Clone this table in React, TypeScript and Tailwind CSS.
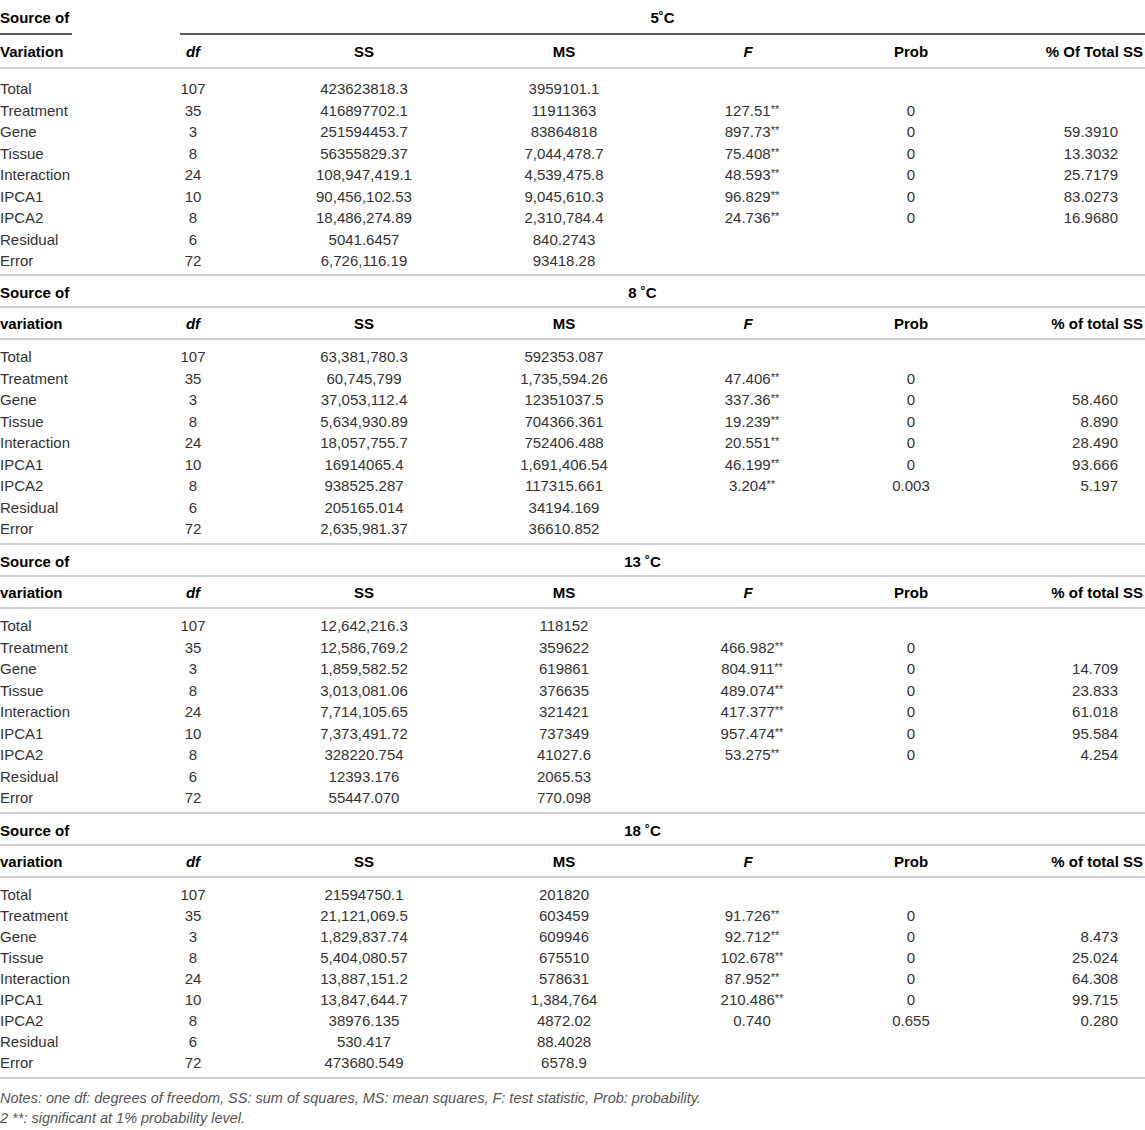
type Row = [string, string, string, string, string, string, string];

interface Section {
  title: string;
  first: boolean;
  srcLabel: string;
  pctLabel: string;
  rowH: string;
  rows: Row[];
}

const sections: Section[] = [
  {
    title: "5˚C",
    first: true,
    srcLabel: "Variation",
    pctLabel: "% Of Total SS",
    rowH: "h-[21.5px]",
    rows: [
      ["Total", "107", "423623818.3", "3959101.1", "", "", ""],
      ["Treatment", "35", "416897702.1", "11911363", "127.51**", "0", ""],
      ["Gene", "3", "251594453.7", "83864818", "897.73**", "0", "59.3910"],
      ["Tissue", "8", "56355829.37", "7,044,478.7", "75.408**", "0", "13.3032"],
      ["Interaction", "24", "108,947,419.1", "4,539,475.8", "48.593**", "0", "25.7179"],
      ["IPCA1", "10", "90,456,102.53", "9,045,610.3", "96.829**", "0", "83.0273"],
      ["IPCA2", "8", "18,486,274.89", "2,310,784.4", "24.736**", "0", "16.9680"],
      ["Residual", "6", "5041.6457", "840.2743", "", "", ""],
      ["Error", "72", "6,726,116.19", "93418.28", "", "", ""],
    ],
  },
  {
    title: "8 ˚C",
    first: false,
    srcLabel: "variation",
    pctLabel: "% of total SS",
    rowH: "h-[21.5px]",
    rows: [
      ["Total", "107", "63,381,780.3", "592353.087", "", "", ""],
      ["Treatment", "35", "60,745,799", "1,735,594.26", "47.406**", "0", ""],
      ["Gene", "3", "37,053,112.4", "12351037.5", "337.36**", "0", "58.460"],
      ["Tissue", "8", "5,634,930.89", "704366.361", "19.239**", "0", "8.890"],
      ["Interaction", "24", "18,057,755.7", "752406.488", "20.551**", "0", "28.490"],
      ["IPCA1", "10", "16914065.4", "1,691,406.54", "46.199**", "0", "93.666"],
      ["IPCA2", "8", "938525.287", "117315.661", "3.204**", "0.003", "5.197"],
      ["Residual", "6", "205165.014", "34194.169", "", "", ""],
      ["Error", "72", "2,635,981.37", "36610.852", "", "", ""],
    ],
  },
  {
    title: "13 ˚C",
    first: false,
    srcLabel: "variation",
    pctLabel: "% of total SS",
    rowH: "h-[21.5px]",
    rows: [
      ["Total", "107", "12,642,216.3", "118152", "", "", ""],
      ["Treatment", "35", "12,586,769.2", "359622", "466.982**", "0", ""],
      ["Gene", "3", "1,859,582.52", "619861", "804.911**", "0", "14.709"],
      ["Tissue", "8", "3,013,081.06", "376635", "489.074**", "0", "23.833"],
      ["Interaction", "24", "7,714,105.65", "321421", "417.377**", "0", "61.018"],
      ["IPCA1", "10", "7,373,491.72", "737349", "957.474**", "0", "95.584"],
      ["IPCA2", "8", "328220.754", "41027.6", "53.275**", "0", "4.254"],
      ["Residual", "6", "12393.176", "2065.53", "", "", ""],
      ["Error", "72", "55447.070", "770.098", "", "", ""],
    ],
  },
  {
    title: "18 ˚C",
    first: false,
    srcLabel: "variation",
    pctLabel: "% of total SS",
    rowH: "h-[21px]",
    rows: [
      ["Total", "107", "21594750.1", "201820", "", "", ""],
      ["Treatment", "35", "21,121,069.5", "603459", "91.726**", "0", ""],
      ["Gene", "3", "1,829,837.74", "609946", "92.712**", "0", "8.473"],
      ["Tissue", "8", "5,404,080.57", "675510", "102.678**", "0", "25.024"],
      ["Interaction", "24", "13,887,151.2", "578631", "87.952**", "0", "64.308"],
      ["IPCA1", "10", "13,847,644.7", "1,384,764", "210.486**", "0", "99.715"],
      ["IPCA2", "8", "38976.135", "4872.02", "0.740", "0.655", "0.280"],
      ["Residual", "6", "530.417", "88.4028", "", "", ""],
      ["Error", "72", "473680.549", "6578.9", "", "", ""],
    ],
  },
];

const cols = "grid grid-cols-[140px_106px_236px_164px_208px_114px_177px]";

function FValue({ v }: { v: string }) {
  if (v.endsWith("**")) {
    return (
      <span>
        {v.slice(0, -2)}
        <span className="relative -top-[3px] text-[11px]">**</span>
      </span>
    );
  }
  return <span>{v}</span>;
}

function TableSection({ s }: { s: Section }) {
  return (
    <div>
      {/* title row */}
      <div
        className={`${cols} items-center font-bold text-black ${
          s.first ? "h-[35px]" : "h-[32px] border-b-2 border-[#cfcfcf]"
        }`}
      >
        <div className="self-stretch flex items-center">
          <span
            className={`pt-[2px] ${s.first ? "h-full flex items-center pr-[3px] border-b-2 border-[#5a5a5a]" : ""}`}
          >
            Source of
          </span>
        </div>
        <div
          className={`col-span-6 self-stretch flex items-center justify-center ${
            s.first ? "ml-[40px] border-b-2 border-[#5a5a5a]" : ""
          }`}
        >
          <span className="pt-[2px]">{s.title}</span>
        </div>
      </div>

      {/* column labels */}
      <div
        className={`${cols} ${s.first ? "h-[34px]" : "h-[32px]"} items-center font-bold text-black border-b-2 border-[#cfcfcf]`}
      >
        <div>{s.srcLabel}</div>
        <div className="text-center italic">df</div>
        <div className="text-center">SS</div>
        <div className="text-center">MS</div>
        <div className="text-center italic pr-[4px]">F</div>
        <div className="text-center">Prob</div>
        <div className="text-right pr-[2px]">{s.pctLabel}</div>
      </div>

      {/* data */}
      <div
        className={`${s.first ? "pt-[9px] pb-[2.5px]" : "pt-[6px] pb-[3.5px]"} border-b-2 border-[#cfcfcf] text-[#333]`}
      >
        {s.rows.map((r) => (
          <div key={r[0]} className={`${cols} ${s.rowH} items-center`}>
            <div>{r[0]}</div>
            <div className="text-center">{r[1]}</div>
            <div className="text-center">{r[2]}</div>
            <div className="text-center">{r[3]}</div>
            <div className="text-center pl-[4px]">
              <FValue v={r[4]} />
            </div>
            <div className="text-center">{r[5]}</div>
            <div className="text-right pr-[27px]">{r[6]}</div>
          </div>
        ))}
      </div>
    </div>
  );
}

export default function App() {
  return (
    <div
      className="w-[1145px] h-[1130px] bg-white text-[15px] leading-none"
      style={{ fontFamily: '"Liberation Sans", Arial, sans-serif' }}
    >
      {sections.map((s) => (
        <TableSection key={s.title} s={s} />
      ))}
      <div className="pt-[9px] text-[14.5px] italic text-[#555] leading-[20px]">
        <p>
          Notes: one df: degrees of freedom, SS: sum of squares, MS: mean squares, F: test
          statistic, Prob: probability.
        </p>
        <p>2 **: significant at 1% probability level.</p>
      </div>
    </div>
  );
}
